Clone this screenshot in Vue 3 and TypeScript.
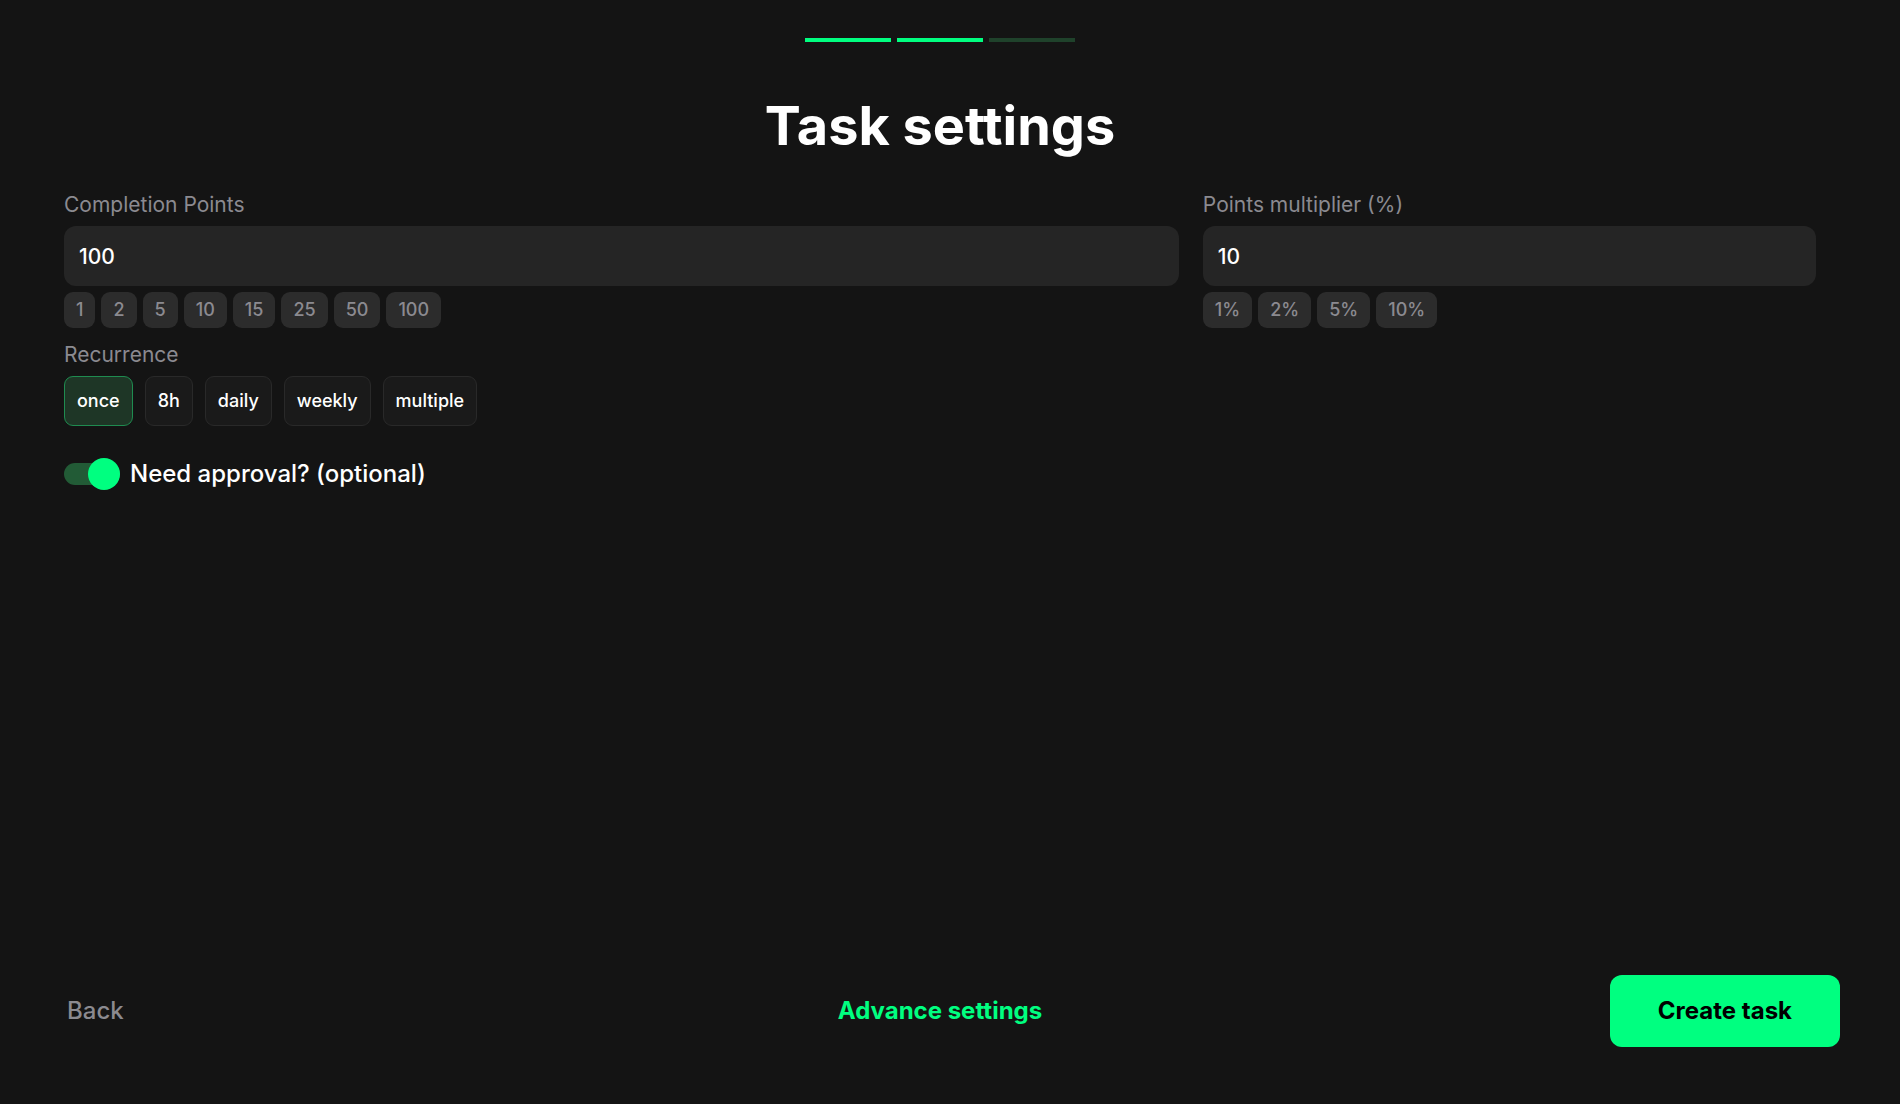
<script setup lang="ts">
import { ref } from 'vue'

const step = 2
const steps = [1, 2, 3]

const points = ref('100')
const multiplier = ref('10')
const pointPresets = ['1', '2', '5', '10', '15', '25', '50', '100']
const multiplierPresets = ['1', '2', '5', '10']

const recurrences = ['once', '8h', 'daily', 'weekly', 'multiple']
const recurrence = ref('once')
const needApproval = ref(true)
</script>

<template>
  <main class="page">
    <div class="steps">
      <span v-for="s in steps" :key="s" class="step" :class="{ done: s <= step }"></span>
    </div>

    <h1 class="title">Task settings</h1>

    <form id="task-form" class="form" @submit.prevent>
      <div class="row">
        <div class="field">
          <label class="label" for="points">Completion Points</label>
          <input id="points" v-model="points" class="input" type="text" inputmode="numeric" />
          <div class="presets">
            <button v-for="p in pointPresets" :key="p" type="button" class="preset" @click="points = p">{{ p }}</button>
          </div>
        </div>
        <div class="field">
          <label class="label" for="multiplier">Points multiplier (%)</label>
          <input id="multiplier" v-model="multiplier" class="input" type="text" inputmode="numeric" />
          <div class="presets">
            <button v-for="p in multiplierPresets" :key="p" type="button" class="preset" @click="multiplier = p">{{ p }}%</button>
          </div>
        </div>
      </div>

      <div class="field">
        <span id="recurrence-label" class="label">Recurrence</span>
        <div class="options" role="group" aria-labelledby="recurrence-label">
          <button
            v-for="r in recurrences"
            :key="r"
            type="button"
            class="option"
            :class="{ selected: r === recurrence }"
            :aria-pressed="r === recurrence"
            @click="recurrence = r"
          >{{ r }}</button>
        </div>
      </div>

      <label class="approval" for="approval">
        <input id="approval" v-model="needApproval" class="switch" type="checkbox" />
        <span>Need approval? (optional)</span>
      </label>
    </form>

    <footer class="footer">
      <div class="side"><button type="button" class="back">Back</button></div>
      <button type="button" class="advance">Advance settings</button>
      <div class="side end"><button type="submit" form="task-form" class="create">Create task</button></div>
    </footer>
  </main>
</template>

<style>
body {
  margin: 0;
  background: #141414;
}
</style>

<style scoped>
.page {
  box-sizing: border-box;
  display: flex;
  flex-direction: column;
  min-height: 100vh;
  padding: 38px 60px 57px 40px;
  background: #141414;
  color: #fff;
  font-family: Inter, "Liberation Sans", sans-serif;
}

button,
input {
  box-sizing: border-box;
  margin: 0;
  font-family: inherit;
}

button {
  border: 0;
  background: none;
  cursor: pointer;
}

.steps {
  display: flex;
  justify-content: center;
  gap: 6px;
}

.step {
  width: 86px;
  height: 4px;
  background: #1f422b;
}

.step.done {
  background: #00ff80;
}

.title {
  margin: 50px 0 30px;
  font-size: 54px;
  line-height: 68px;
  font-weight: 700;
  text-align: center;
}

.form {
  display: flex;
  flex-direction: column;
  gap: 12px;
  padding: 0 24px;
}

.row {
  display: grid;
  grid-template-columns: 20fr 11fr;
  gap: 24px;
}

.field {
  display: flex;
  flex-direction: column;
}

.label {
  margin-bottom: 6px;
  color: #8b8a90;
  font-size: 21px;
  line-height: 30px;
}

.input {
  width: 100%;
  height: 60px;
  padding: 0 15px;
  border: 0;
  border-radius: 12px;
  background: #252525;
  color: #fff;
  font-size: 21px;
  font-weight: 500;
}

.presets {
  display: flex;
  gap: 6px;
  margin-top: 6px;
}

.preset {
  height: 36px;
  padding: 0 12px 2px;
  border-radius: 9px;
  background: #2c2c2c;
  color: #8b8a90;
  font-size: 18px;
  font-weight: 500;
}

.options {
  display: flex;
  gap: 12px;
}

.option {
  height: 50px;
  padding: 0 12px 2px;
  border: 1px solid #292929;
  border-radius: 9px;
  background: #1a1a1a;
  color: #fff;
  font-size: 18px;
  font-weight: 500;
}

.option.selected {
  border-color: #1f8c50;
  background: #1e3626;
}

.approval {
  display: flex;
  align-items: center;
  align-self: flex-start;
  gap: 10px;
  margin-top: 20px;
  font-size: 24px;
  line-height: 32px;
  font-weight: 500;
}

.switch {
  display: flex;
  align-items: center;
  appearance: none;
  width: 56px;
  height: 22px;
  border-radius: 11px;
  background: #225b36;
}

.switch::before {
  content: "";
  flex: none;
  width: 32px;
  height: 32px;
  border-radius: 50%;
  background: #8b8a90;
}

.switch:checked::before {
  margin-left: auto;
  background: #00ff80;
}

.footer {
  display: flex;
  align-items: center;
  margin-top: auto;
}

.side {
  display: flex;
  flex: 1;
}

.end {
  justify-content: flex-end;
}

.back,
.advance,
.create {
  height: 72px;
  font-size: 24px;
}

.back {
  padding: 0 27px 2px;
  color: #8b8a90;
  font-weight: 500;
}

.advance {
  padding: 0 0 2px;
  color: #00ff80;
  font-weight: 700;
}

.create {
  padding: 0 48px 2px;
  border-radius: 12px;
  background: #00ff80;
  color: #000;
  font-weight: 700;
}
</style>
